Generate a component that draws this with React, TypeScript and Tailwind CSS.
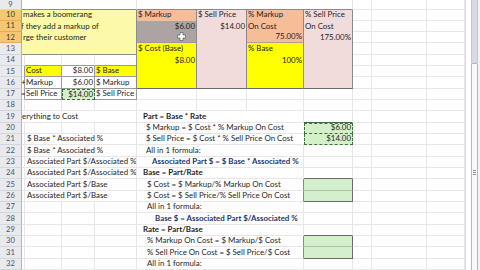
import React from "react";

const GL = "border-r border-b border-r-[#e9e5e9] border-b-[#e9e5e9]";
const TBL = "border-r border-b border-r-[#9a9a9a] border-b-[#9a9a9a]";
const BLK = "border-r border-r-[#8a8a8a]";
const BLKB = "border-r border-b border-r-[#8a8a8a] border-b-[#6a6a6a]";

const SAL = "bg-[#f7bc98]";
const PNK = "bg-[#f2dcdb]";
const YEL = "bg-[#ffff00]";
const GRY = "bg-[#aca4a2]";
const GRN = "bg-[#d3f0cb]";
const TBX = "bg-[#fcf9a8]";

const A = "w-[3px]";
const B = "w-[37px]";
const Cw = "w-[33px]";
const D = "w-[42px]";
const E = "w-[60px]";
const F = "w-[50px]";
const Gw = "w-[57px]";
const Hw = "w-[49px]";
const I = "w-[19px]";
const J = "w-[55px]";
const K = "w-[38px]";
const AD = "w-[115px]";
const BD = "w-[112px]";
const EG = "w-[167px]";
const EH = "w-[216px]";

type CP = {
  w: string;
  b?: string;
  bg?: string;
  right?: boolean;
  cls?: string;
  children?: React.ReactNode;
};

function C({ w, b = GL, bg = "", right = false, cls = "", children }: CP) {
  return (
    <div
      className={`${w} ${b} ${bg} ${cls} shrink-0 h-full flex items-center overflow-hidden whitespace-nowrap ${
        right ? "justify-end pr-[1px]" : "pl-[1px]"
      }`}
    >
      {children}
    </div>
  );
}

function Hd({ n, hl, top }: { n: number; hl?: boolean; top?: boolean }) {
  return (
    <div
      className={`w-[22px] shrink-0 h-full flex justify-center text-[7.6px] border-r border-b ${
        top ? "items-start pt-[1px]" : "items-center"
      } ${
        hl
          ? "bg-[#f7c672] border-r-[#c99a4a] border-b-[#e3ad57] text-[#3a3a3a]"
          : "bg-[#e8eaee] border-r-[#a9b5c6] border-b-[#d2d6dd] text-[#45546c]"
      }`}
    >
      {n}
    </div>
  );
}

function R({
  n,
  hl,
  top,
  h = "h-[11.35px]",
  children,
}: {
  n: number;
  hl?: boolean;
  top?: boolean;
  h?: string;
  children?: React.ReactNode;
}) {
  return (
    <div className={`flex ${h}`}>
      <Hd n={n} hl={hl} top={top} />
      {children}
    </div>
  );
}

function Tail() {
  return (
    <>
      <C w={I} />
      <C w={J} />
      <C w={K} />
    </>
  );
}

function Cursor() {
  return (
    <svg
      className="absolute left-[177px] top-[32px]"
      width="9"
      height="9"
      viewBox="0 0 9 9"
    >
      <path
        d="M3 0.5h3v2.5h2.5v3h-2.5v2.5h-3v-2.5h-2.5v-3h2.5z"
        fill="#ffffff"
        stroke="#6a6a6a"
        strokeWidth="0.8"
      />
    </svg>
  );
}

function Scrollbar() {
  return (
    <div className="w-[15px] h-full flex bg-white">
      <div className="w-[6px] h-full border-l border-l-[#dcdae0]" />
      <div className="w-[7px] h-full flex flex-col overflow-hidden">
        <div className="h-[63px] shrink-0 bg-[#d9d9e3] border-x border-x-[#c6c6d0]" />
        <div className="h-[218px] shrink-0 bg-[#f8f8fb] border border-[#b4b4c2] rounded-[1px] flex flex-col items-center justify-center gap-[1px]">
          <div className="w-[3px] h-[1px] bg-[#8c8c9a]" />
          <div className="w-[3px] h-[1px] bg-[#8c8c9a]" />
          <div className="w-[3px] h-[1px] bg-[#8c8c9a]" />
        </div>
      </div>
      <div className="w-[2px] h-full bg-[#f3f3f5]" />
    </div>
  );
}

export default function App() {
  return (
    <div className="relative w-[480px] h-[270px] overflow-hidden bg-white flex font-['Lato',sans-serif] text-[7.9px] text-[#1e1e1e] leading-none">
      <div className="w-[465px] h-full flex flex-col overflow-hidden">
        <R n={9} top h="h-[9.5px]">
          <C w={AD} b="border-r border-b border-r-[#e9e5e9] border-b-[#8c8c8c]" />
          <C w={EH} b="border-r border-b border-r-[#e9e5e9] border-b-[#8a8a8a]" />
          <Tail />
        </R>
        <R n={10} hl>
          <C w={AD} b="border-r border-r-[#8c8c8c]" bg={TBX}>
            makes a boomerang
          </C>
          <C w={E} b={BLK} bg={SAL}>$ Markup</C>
          <C w={F} b={BLK} bg={PNK}>$ Sell Price</C>
          <C w={Gw} b={BLK} bg={SAL}>% Markup</C>
          <C w={Hw} b={BLK} bg={PNK}>% Sell Price</C>
          <Tail />
        </R>
        <R n={11} hl>
          <C w={AD} b="border-r border-r-[#8c8c8c]" bg={TBX}>
            <span className="-ml-[2px]">f they add a markup of</span>
          </C>
          <C w={E} b={BLK} bg={GRY} right>$6.00</C>
          <C w={F} b={BLK} bg={PNK} right>$14.00</C>
          <C w={Gw} b={BLK} bg={SAL}>On Cost</C>
          <C w={Hw} b={BLK} bg={PNK}>On Cost</C>
          <Tail />
        </R>
        <R n={12} hl>
          <C w={AD} b="border-r border-r-[#8c8c8c]" bg={TBX}>
            rge their customer
          </C>
          <C w={E} b="border-r border-b border-r-[#8a8a8a] border-b-[#9a9a9a]" bg={GRY} />
          <C w={F} b={BLK} bg={PNK} />
          <C w={Gw} b="border-r border-b border-r-[#8a8a8a] border-b-[#b0a090]" bg={SAL} right>75.00%</C>
          <C w={Hw} b={BLK} bg={PNK} right>175.00%</C>
          <Tail />
        </R>
        <R n={13}>
          <C w={AD} b="border-r border-b border-r-[#8c8c8c] border-b-[#8c8c8c]" bg={TBX} />
          <C w={E} b={BLK} bg={YEL}>$ Cost (Base)</C>
          <C w={F} b={BLK} bg={PNK} />
          <C w={Gw} b={BLK} bg={YEL}>% Base</C>
          <C w={Hw} b={BLK} bg={PNK} />
          <Tail />
        </R>
        <R n={14}>
          <C w={A} />
          <C w={B} b="border-r border-b border-r-[#e9e5e9] border-b-[#9a9a9a]" />
          <C w={Cw} b="border-r border-b border-r-[#e9e5e9] border-b-[#9a9a9a]" />
          <C w={D} b="border-r border-b border-r-[#8a8a8a] border-b-[#9a9a9a]" />
          <C w={E} b={BLK} bg={YEL} right>$8.00</C>
          <C w={F} b={BLK} bg={PNK} />
          <C w={Gw} b={BLK} bg={YEL} right>100%</C>
          <C w={Hw} b={BLK} bg={PNK} />
          <Tail />
        </R>
        <R n={15}>
          <C w={A} b="border-r border-b border-r-[#9a9a9a] border-b-[#e9e5e9]" />
          <C w={B} b={TBL} bg={YEL}>Cost</C>
          <C w={Cw} b={TBL} right>$8.00</C>
          <C w={D} b="border-r border-b border-r-[#8a8a8a] border-b-[#9a9a9a]" bg={YEL}>$ Base</C>
          <C w={E} b={BLK} bg={YEL} />
          <C w={F} b={BLK} bg={PNK} />
          <C w={Gw} b={BLK} bg={YEL} />
          <C w={Hw} b={BLK} bg={PNK} />
          <Tail />
        </R>
        <R n={16}>
          <C w={A} b="border-r border-b border-r-[#9a9a9a] border-b-[#e9e5e9]" cls="overflow-visible">
            <span className="-ml-[2px]">+</span>
          </C>
          <C w={B} b={TBL}>Markup</C>
          <C w={Cw} b={TBL} right>$6.00</C>
          <C w={D} b="border-r border-b border-r-[#8a8a8a] border-b-[#9a9a9a]">$ Markup</C>
          <C w={E} b={BLKB} bg={YEL} />
          <C w={F} b={BLKB} bg={PNK} />
          <C w={Gw} b={BLKB} bg={YEL} />
          <C w={Hw} b={BLKB} bg={PNK} />
          <Tail />
        </R>
        <R n={17}>
          <C w={A} b="border-r border-b border-r-[#9a9a9a] border-b-[#e9e5e9]" cls="overflow-visible">
            <span className="-ml-[2px]">=</span>
          </C>
          <C w={B} b={TBL}>Sell Price</C>
          <C w={Cw} b="border border-dashed border-[#3f6f3f]" bg={GRN} right>$14.00</C>
          <C w={D} b={TBL}>$ Sell Price</C>
          <C w={E} />
          <C w={F} />
          <C w={Gw} />
          <C w={Hw} />
          <Tail />
        </R>
        <R n={18}>
          <C w={A} />
          <C w={B} />
          <C w={Cw} />
          <C w={D} />
          <C w={E} />
          <C w={F} />
          <C w={Gw} />
          <C w={Hw} />
          <Tail />
        </R>
        <R n={19}>
          <C w={AD}>
            <span className="-ml-[9px]">everything to Cost</span>
          </C>
          <C w={EG} cls="font-bold pl-[6px]">Part = Base * Rate</C>
          <C w={Hw} b="border-r border-b border-r-[#e9e5e9] border-b-[#3f6f3f]" />
          <Tail />
        </R>
        <R n={20}>
          <C w={A} />
          <C w={B} />
          <C w={Cw} />
          <C w={D} />
          <C w={EG} b="border-b border-b-[#e9e5e9]" cls="pl-[9px]">
            $ Markup = $ Cost * % Markup On Cost
          </C>
          <C w={Hw} b="border border-dashed border-[#3f6f3f]" bg={GRN} right>$6.00</C>
          <Tail />
        </R>
        <R n={21}>
          <C w={A} />
          <C w={BD} cls="pl-[2px]">$ Base * Associated %</C>
          <C w={EG} b="border-b border-b-[#e9e5e9]" cls="pl-[9px]">
            $ Sell Price = $ Cost * % Sell Price On Cost
          </C>
          <C w={Hw} b="border-x border-b border-dashed border-[#3f6f3f]" bg={GRN} right>$14.00</C>
          <Tail />
        </R>
        <R n={22}>
          <C w={A} />
          <C w={BD} cls="pl-[2px]">$ Base * Associated %</C>
          <C w={EG} cls="pl-[9px]">All in 1 formula:</C>
          <C w={Hw} />
          <Tail />
        </R>
        <R n={23}>
          <C w={A} />
          <C w={BD} cls="pl-[2px]">Associated Part $/Associated %</C>
          <C w={EG} cls="pl-[15px] font-bold text-[#1f3470]">
            Associated Part $ = $ Base * Associated %
          </C>
          <C w={Hw} />
          <Tail />
        </R>
        <R n={24}>
          <C w={A} />
          <C w={BD} cls="pl-[2px]">Associated Part $/Associated %</C>
          <C w={EG} cls="pl-[6px] font-bold">Base = Part/Rate</C>
          <C w={Hw} b="border-r border-b border-r-[#e9e5e9] border-b-[#6a6a6a]" />
          <Tail />
        </R>
        <R n={25}>
          <C w={A} />
          <C w={BD} cls="pl-[2px]">Associated Part $/Base</C>
          <C w={EG} b="border-r border-b border-r-[#8a8a8a] border-b-[#e9e5e9]" cls="pl-[10px]">
            $ Cost = $ Markup/% Markup On Cost
          </C>
          <C w={Hw} b="border-r border-b border-r-[#6a6a6a] border-b-[#a9c9a2]" bg={GRN} />
          <Tail />
        </R>
        <R n={26}>
          <C w={A} />
          <C w={BD} cls="pl-[2px]">Associated Part $/Base</C>
          <C w={EG} b="border-r border-b border-r-[#8a8a8a] border-b-[#e9e5e9]" cls="pl-[10px]">
            $ Cost = $ Sell Price/% Sell Price On Cost
          </C>
          <C w={Hw} b="border-r border-b border-r-[#6a6a6a] border-b-[#6a6a6a]" bg={GRN} />
          <Tail />
        </R>
        <R n={27}>
          <C w={A} />
          <C w={B} />
          <C w={Cw} />
          <C w={D} />
          <C w={EG} cls="pl-[10px]">All in 1 formula:</C>
          <C w={Hw} />
          <Tail />
        </R>
        <R n={28}>
          <C w={A} />
          <C w={B} />
          <C w={Cw} />
          <C w={D} />
          <C w={EG} cls="pl-[18px] font-bold text-[#1f3470]">
            Base $ = Associated Part $/Associated %
          </C>
          <C w={Hw} />
          <Tail />
        </R>
        <R n={29}>
          <C w={A} />
          <C w={B} />
          <C w={Cw} />
          <C w={D} />
          <C w={EG} cls="pl-[6px] font-bold">Rate = Part/Base</C>
          <C w={Hw} b="border-r border-b border-r-[#e9e5e9] border-b-[#6a6a6a]" />
          <Tail />
        </R>
        <R n={30}>
          <C w={A} />
          <C w={B} />
          <C w={Cw} />
          <C w={D} />
          <C w={EG} b="border-r border-b border-r-[#8a8a8a] border-b-[#e9e5e9]" cls="pl-[10px]">
            % Markup On Cost = $ Markup/$ Cost
          </C>
          <C w={Hw} b="border-r border-b border-r-[#6a6a6a] border-b-[#a9c9a2]" bg={GRN} />
          <Tail />
        </R>
        <R n={31}>
          <C w={A} />
          <C w={B} />
          <C w={Cw} />
          <C w={D} />
          <C w={EG} b="border-r border-b border-r-[#8a8a8a] border-b-[#e9e5e9]" cls="pl-[10px]">
            % Sell Price On Cost = $ Sell Price/$ Cost
          </C>
          <C w={Hw} b="border-r border-b border-r-[#6a6a6a] border-b-[#6a6a6a]" bg={GRN} />
          <Tail />
        </R>
        <R n={32}>
          <C w={A} />
          <C w={B} />
          <C w={Cw} />
          <C w={D} />
          <C w={EG} cls="pl-[10px]">All in 1 formula:</C>
          <C w={Hw} />
          <Tail />
        </R>
      </div>
      <Scrollbar />
      <Cursor />
    </div>
  );
}
